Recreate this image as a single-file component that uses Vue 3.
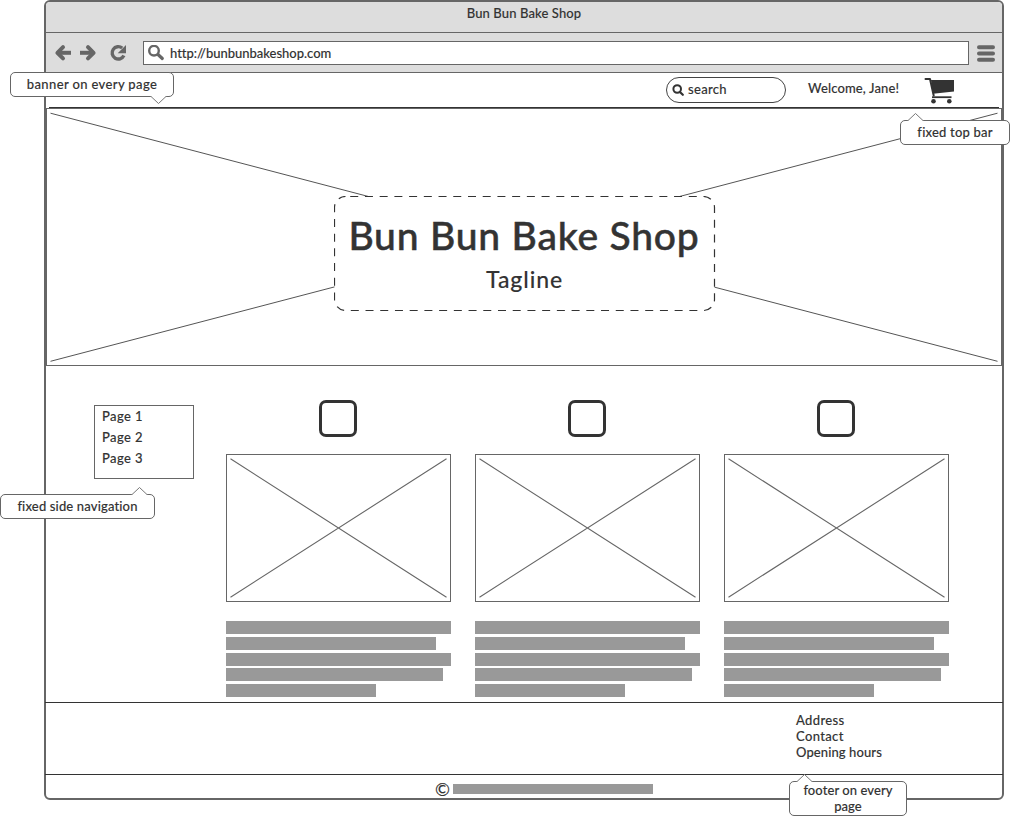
<script setup>
const cards = [1, 2, 3]
const lines = [225, 210, 225, 217, 150]
const pages = ['Page 1', 'Page 2', 'Page 3']
const contact = [
  { text: 'Address', cls: 't-address' },
  { text: 'Contact', cls: 't-contact' },
  { text: 'Opening hours', cls: 't-hours' },
]
</script>

<template>
  <div class="page">
    <div class="window">
      <header class="titlebar"><span class="t-title">Bun Bun Bake Shop</span></header>
      <div class="toolbar">
        <svg class="nav-icons" width="78" height="22" viewBox="0 0 78 22">
          <g fill="none" stroke="#666" stroke-width="4" stroke-linejoin="round">
            <path d="M9 5.200 3.400 10.800l5.600 5.600" stroke-linecap="round" />
            <path d="M4 10.800h13" />
            <path d="M34 5.200l5.600 5.600-5.600 5.600" stroke-linecap="round" />
            <path d="M39 10.800H26" />
          </g>
          <path d="M68.200 6a6.200 6.200 0 1 0 1.700 7.600" fill="none" stroke="#666" stroke-width="3.400" />
          <path d="M72 3v8.300h-8.300z" fill="#666" />
        </svg>
        <div class="url">
          <svg width="17" height="16" viewBox="0 0 17 16" fill="none" stroke="#666">
            <circle cx="6" cy="5.700" r="4.800" stroke-width="2.400" />
            <path d="m10 9.500 4.300 4" stroke-width="3.200" stroke-linecap="round" />
          </svg>
          <span class="t-url">http://bunbunbakeshop.com</span>
        </div>
        <svg class="menu" width="18" height="17" viewBox="0 0 18 17" stroke="#666" stroke-width="4" stroke-linecap="round">
          <path d="M2 2.300h14M2 8.500h14M2 14.700h14" />
        </svg>
      </div>

      <div class="topbar">
        <div class="search">
          <svg width="12" height="12" viewBox="0 0 12 12" fill="none" stroke="#333">
            <circle cx="5.200" cy="5" r="3.800" stroke-width="2" />
            <path d="m8.200 8.200 2.600 2.600" stroke-width="2.200" stroke-linecap="round" />
          </svg>
          <span class="t-search">search</span>
        </div>
        <span class="welcome t-welcome">Welcome, Jane!</span>
        <svg class="cart" width="31" height="27" viewBox="0 0 31 27" fill="#333">
          <path d="M7 3h23v11.500L9 16.800z" />
          <path d="M1.500 2h4.500L9.700 18.500" fill="none" stroke="#333" stroke-width="2" stroke-linecap="round" stroke-linejoin="round" />
          <path d="M8 20.200h19.500" stroke="#333" stroke-width="1.800" />
          <circle cx="9.500" cy="24.200" r="2.300" /><circle cx="25.300" cy="24.200" r="2.300" />
        </svg>
      </div>

      <section class="banner">
        <svg class="cross" width="956" height="258" viewBox="0 0 956 258" stroke="#555">
          <path d="M4.500 5.200 951.500 253.300M951.500 5.200 4.500 253.300" />
        </svg>
        <div class="hero">
          <svg class="dash" width="382" height="116" viewBox="0 0 382 116">
            <path class="fill" d="M11 .5H370L380.500 11V104L370 114.500H11L.5 104V11z" fill="#fff" />
            <rect x=".5" y=".5" width="380" height="114" rx="11" fill="none" stroke="#333" stroke-width="1.200" stroke-dasharray="8 6.720" stroke-dashoffset="10" />
          </svg>
          <h1 class="t-h1">Bun Bun Bake Shop</h1>
          <p class="t-tag">Tagline</p>
        </div>
      </section>

      <main class="content">
        <nav class="side"><a v-for="p in pages" :key="p" class="t-page">{{ p }}</a></nav>
        <div class="cards">
          <article v-for="c in cards" :key="c" class="card">
            <div class="box"></div>
            <svg class="image" width="225" height="148" viewBox="0 0 225 148" fill="none" stroke="#666">
              <rect x=".5" y=".5" width="224" height="147" />
              <path d="M4.500 4.800 220.500 143.200M220.500 4.800 4.500 143.200" stroke-width="1.100" />
            </svg>
            <div class="lines">
              <i v-for="(w, i) in lines" :key="i" :style="{ width: w + 'px' }"></i>
            </div>
          </article>
        </div>
      </main>

      <footer class="footer">
        <ul><li v-for="l in contact" :key="l.text"><span :class="l.cls">{{ l.text }}</span></li></ul>
      </footer>
      <div class="copyright"><span class="copy">©</span><i></i></div>
    </div>

    <div class="note n-banner">
      <span class="t-n1">banner on every page</span>
      <svg class="tip down" width="17" height="9" viewBox="0 0 17 9"><path d="M.5 0 8.500 7.500 16.500 0" /></svg>
    </div>
    <div class="note n-top">
      <span class="t-n2">fixed top bar</span>
      <svg class="tip" width="17" height="9" viewBox="0 0 17 9"><path d="M.5 9 8.500 1.500 16.500 9" /></svg>
    </div>
    <div class="note n-side">
      <span class="t-n3">fixed side navigation</span>
      <svg class="tip" width="17" height="9" viewBox="0 0 17 9"><path d="M.5 9 8.500 1.500 16.500 9" /></svg>
    </div>
    <div class="note n-footer">
      <span class="t-n4">footer on every</span><span class="t-n5">page</span>
      <svg class="tip" width="17" height="9" viewBox="0 0 17 9"><path d="M.5 9 8.500 1.500 16.500 9" /></svg>
    </div>
  </div>
</template>

<style>
body { background: #fff; }
</style>

<style scoped>
* { box-sizing: border-box; }
.page {
  position: relative; width: 1010px; height: 817px; overflow: hidden;
  font: 500 13px/16px Lato, "Open Sans", sans-serif; color: #333; white-space: nowrap;
  font-variant-ligatures: none; -webkit-text-stroke: .12px #333;
}
svg { display: block; flex: none; }
.window {
  width: 960px; height: 800px; margin-left: 44px; border: 2px solid #666; border-radius: 6px;
  display: flex; flex-direction: column; background: #fff;
}
.titlebar { height: 31px; flex: none; background: #ddd; border-bottom: 1px solid #666; border-radius: 4px 4px 0 0; text-align: center; padding-top: 3px; }
.toolbar { height: 40px; flex: none; background: #ddd; border-bottom: 1px solid #666; display: flex; align-items: center; padding: 0 7px 0 8px; }
.url { width: 826px; height: 24px; margin-left: 11px; border: 1px solid #666; background: #fff; display: flex; align-items: center; padding-left: 4px; gap: 5px; }
.menu { margin: 1px 0 0 7.500px; }
.topbar { height: 35px; flex: none; display: flex; align-items: flex-start; margin: 0 3px; border-bottom: 1px solid #333; padding: 4px 0 0 617px; }
.search { width: 120px; height: 26px; border: 1px solid #444; border-radius: 13px; display: flex; align-items: center; padding-left: 5px; gap: 4px; }
.search span { margin-top: -2px; }
.welcome { margin: 3px 0 0 22px; width: 91px; }
.cart { margin-left: 25px; }
.banner { position: relative; height: 258px; flex: none; border: 1px solid #666; display: flex; justify-content: center; }
.cross { position: absolute; left: -1px; top: -1px; }
.hero { position: relative; width: 382px; height: 116px; margin: 87px 0 0 2px; text-align: center; }
.dash { position: absolute; left: 0; top: 0; }
h1 { position: relative; margin: 15px 2px 0 0; font-weight: 500; font-size: 39px; line-height: 48px; -webkit-text-stroke: .5px #333; }
.hero p { position: relative; margin: 5px 1px 0 0; font-size: 23px; line-height: 30px; }
.content { height: 336px; flex: none; display: flex; align-items: flex-start; padding-left: 48px; }
.side { width: 100px; height: 74px; margin-top: 39px; border: 1px solid #666; padding: 0 0 0 7px; display: flex; flex-direction: column; line-height: 21px; }
.side a { align-self: flex-start; }
.cards { display: flex; gap: 24px; margin: 34px 0 0 32px; }
.card { width: 225px; display: flex; flex-direction: column; align-items: center; }
.box { width: 38px; height: 37px; border: 3px solid #333; border-radius: 7px; margin-right: 2px; }
.image { margin-top: 17px; }
.lines { width: 225px; margin-top: 19px; display: flex; flex-direction: column; gap: 2.800px; }
.lines i { height: 13px; background: #999; }
.footer { height: 73px; flex: none; margin: 0 -1px; border-top: 1px solid #333; border-bottom: 1px solid #333; padding: 9px 0 0 751px; }
ul { list-style: none; margin: 0; padding: 0; }
.copyright { flex: 1; display: flex; align-items: center; justify-content: flex-start; padding: 4px 0 0 389px; }
.copy { width: 18px; font: 18px/18px Lato, sans-serif; }
.copyright i { width: 200px; height: 10px; background: #999; }
.note { position: absolute; background: #fff; border: 1px solid #666; border-radius: 5px; display: flex; flex-direction: column; align-items: center; padding-top: 3px; }
.n-banner { left: 10px; top: 72px; width: 164px; height: 25px; }
.n-top { left: 900px; top: 120px; width: 110px; height: 25px; }
.n-side { left: 0; top: 494px; width: 155px; height: 25px; }
.n-footer { left: 789px; top: 781px; width: 118px; height: 35px; padding-top: 0; }
.tip { position: absolute; left: 6px; top: -9px; fill: #fff; stroke: #777; }
.tip.down { top: 23px; left: 139px; }
.n-side .tip { left: 130px; }
.t-title { letter-spacing: .12px; }
.t-url { letter-spacing: -.02px; }
.t-search { letter-spacing: .3px; }
.t-welcome { letter-spacing: .14px; }
.t-h1 { letter-spacing: .8px; }
.t-tag { letter-spacing: .9px; }
.t-page { letter-spacing: .4px; }
.t-address, .t-contact { letter-spacing: .35px; }
.t-hours { letter-spacing: .1px; }
.t-n1 { letter-spacing: .37px; }
.t-n2 { letter-spacing: .2px; }
.t-n3 { letter-spacing: .15px; }
.t-n4, .t-n5 { letter-spacing: .08px; }
</style>
